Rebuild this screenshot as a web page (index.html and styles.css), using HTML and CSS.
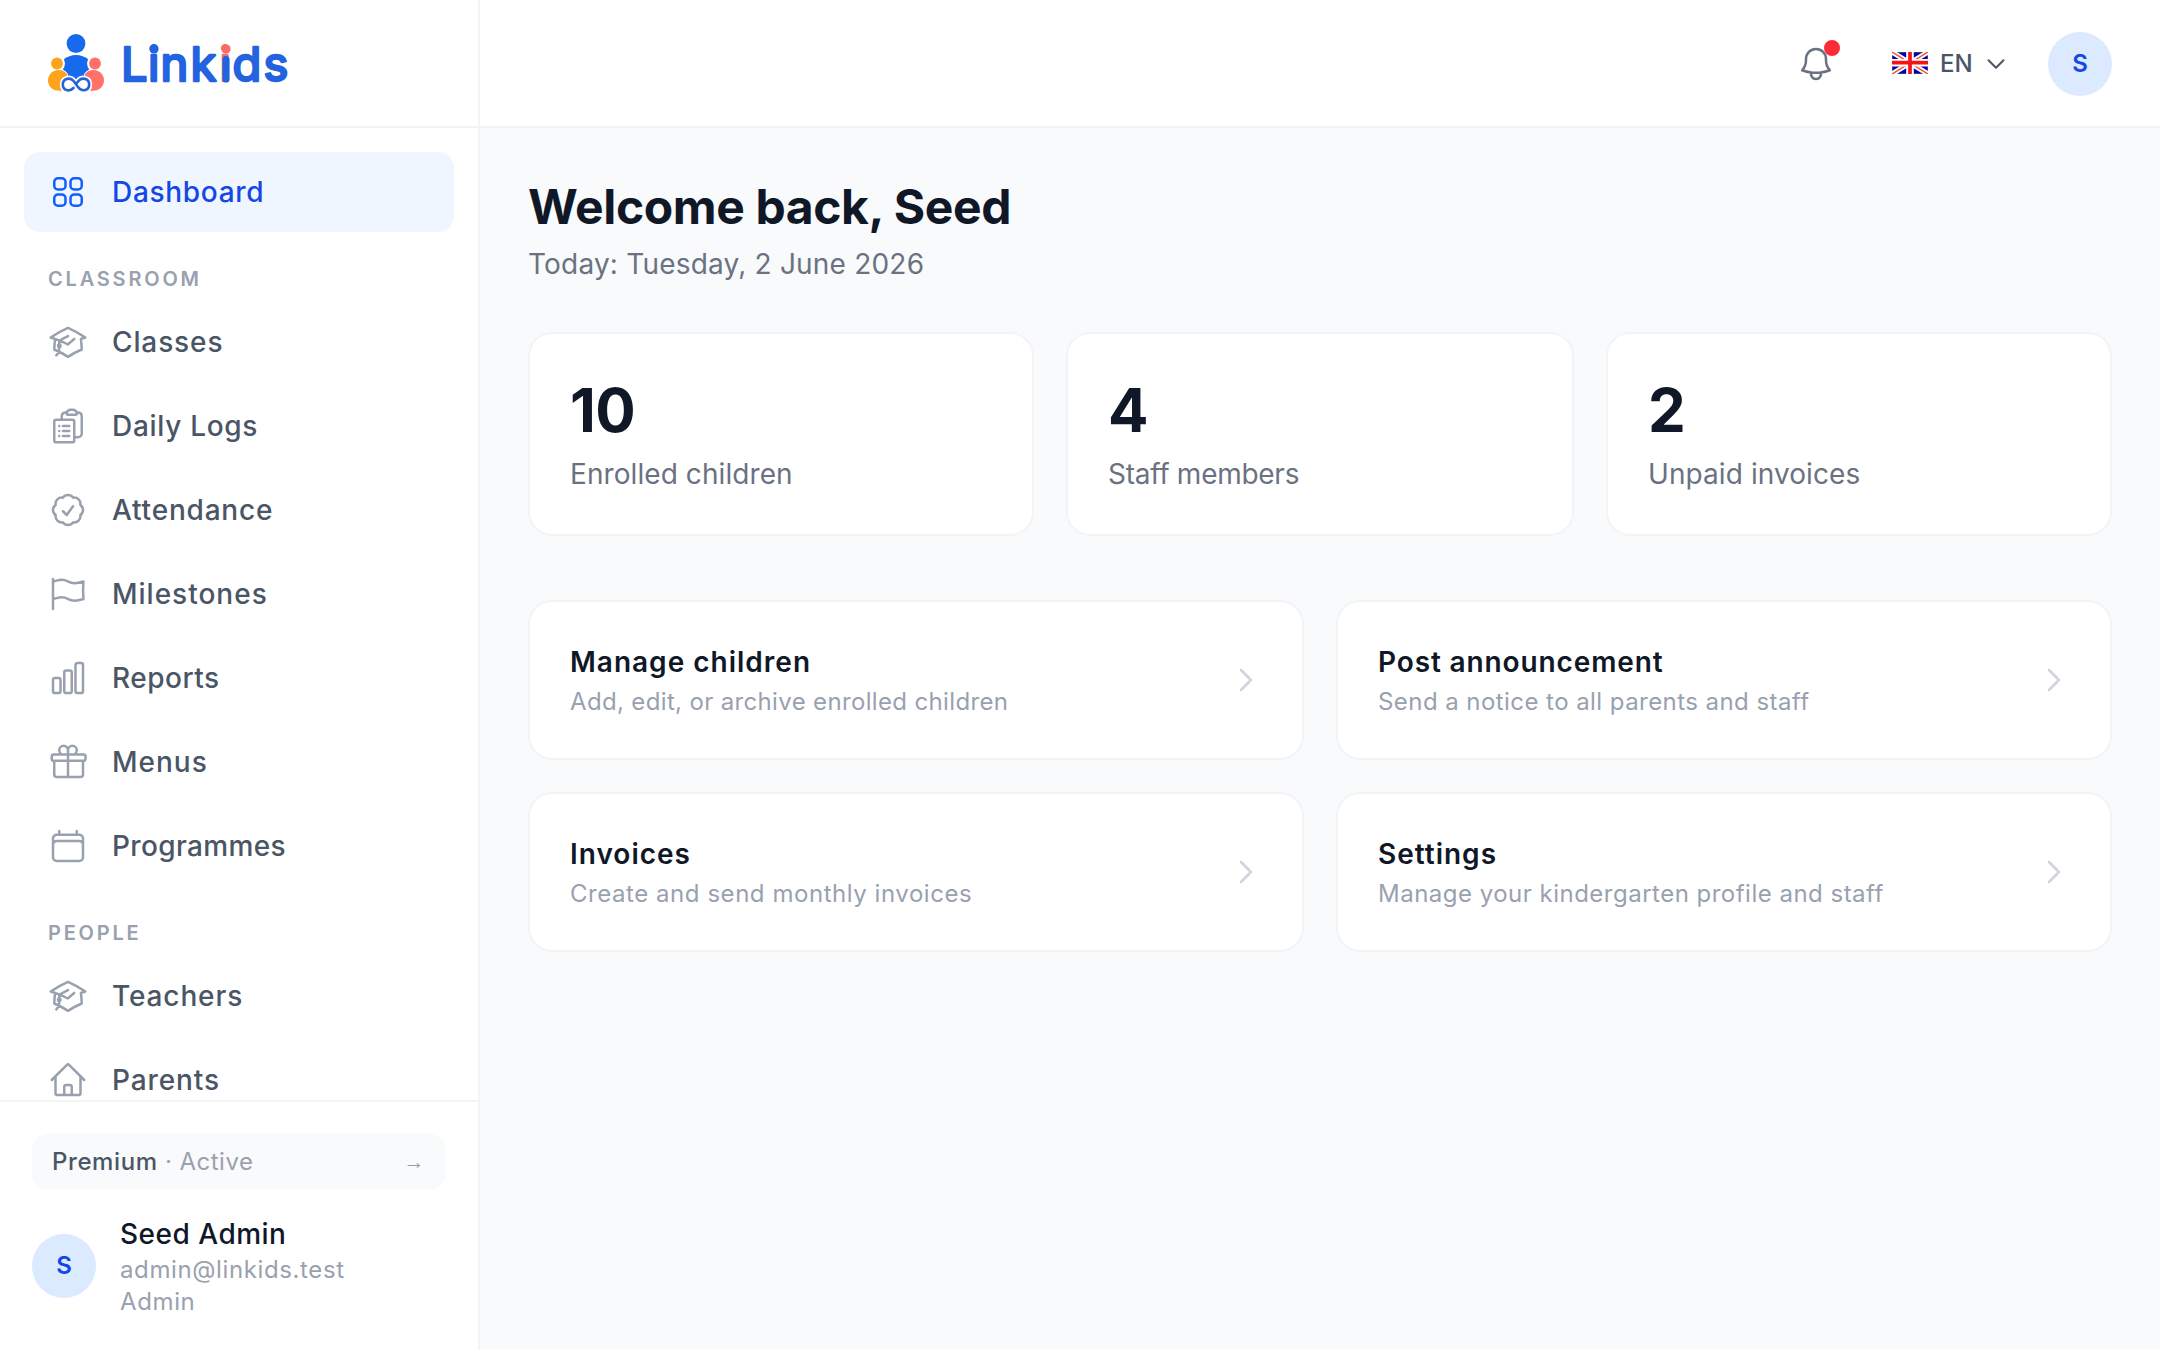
FILE: index.html
```html
<!DOCTYPE html>
<html lang="en">
<head>
  <meta charset="UTF-8">
  <meta name="viewport" content="width=device-width, initial-scale=1.0">
  <title>Linkids - Dashboard</title>
  <link rel="stylesheet" href="styles.css">
</head>
<body>
  <svg class="sprite" aria-hidden="true">
    <symbol id="i-cap" viewBox="0 0 24 24"><path d="M4.26 10.147a60.438 60.438 0 0 0-.491 6.347A48.62 48.62 0 0 1 12 20.904a48.62 48.62 0 0 1 8.232-4.41 60.46 60.46 0 0 0-.491-6.347m-15.482 0a50.636 50.636 0 0 0-2.658-.813A59.906 59.906 0 0 1 12 3.493a59.903 59.903 0 0 1 10.399 5.84c-.896.248-1.783.52-2.658.814m-15.482 0A50.717 50.717 0 0 1 12 13.489a50.702 50.702 0 0 1 3.74-3.342M6.75 15a.75.75 0 1 0 0-1.5.75.75 0 0 0 0 1.5Zm0 0v-3.675A55.378 55.378 0 0 1 12 8.443m-7.007 11.55A5.981 5.981 0 0 0 6.75 15.75v-1.5"/></symbol>
    <symbol id="i-right" viewBox="0 0 24 24"><path d="m8.25 4.5 7.5 7.5-7.5 7.5"/></symbol>
  </svg>

  <aside class="sidebar">
    <div class="brand">
      <svg class="logo" viewBox="0 0 244 64">
        <circle cx="28" cy="11.5" r="9.4" fill="#1769ee"/>
        <path d="M15.5 27.5Q21 23 28 23T40.5 27.5L41 40Q36 47 28 50Q20 47 15 40Z" fill="#1769ee"/>
        <circle cx="9" cy="31.5" r="8" fill="#fff"/>
        <circle cx="47" cy="31.5" r="8" fill="#fff"/>
        <path d="M0 48.5C0 42 5 37.9 10.5 37.9C14.5 37.9 17 39.5 19 42V58.7H11C4.5 58.7 0 54 0 48.5Z" fill="#fea31c" stroke="#fff" stroke-width="1.6" paint-order="stroke"/>
        <path d="M56 48.5C56 42 51 37.9 45.5 37.9C41.5 37.9 39 39.5 37 42V58.7H45C51.5 58.7 56 54 56 48.5Z" fill="#ff7169" stroke="#fff" stroke-width="1.6" paint-order="stroke"/>
        <circle cx="9" cy="31.5" r="5.9" fill="#fea31c"/>
        <circle cx="47" cy="31.5" r="5.9" fill="#ff7169"/>
        <path d="M25.5 56C21 60.5 14.8 58 14.8 52.5C14.8 46.5 22 44.5 26 49.5L30 55C34 60.5 41.2 58.5 41.2 52.5C41.2 46.5 34 44.5 30 49.5Z" fill="#fff" stroke="#fff" stroke-width="6"/>
        <path d="M25.5 56C21 60.5 14.8 58 14.8 52.5C14.8 46.5 22 44.5 26 49.5L30 55C34 60.5 41.2 58.5 41.2 52.5C41.2 46.5 34 44.5 30 49.5L28.6 51.3" stroke="#2563d8" stroke-width="2.6"/>
        <text class="wordmark" y="49" x="73 100 112.5 142.5 171.5 184.5 215.5">Link<tspan class="coral">i</tspan>ds</text>
        <!-- blue stem over the coral i, round dots on both -->
        <rect x="174.4" y="24" width="7.2" height="26.5" rx="3.5" fill="#2463e0"/>
        <circle cx="106" cy="17" r="4.6" fill="#2463e0"/>
        <circle cx="178" cy="17" r="4.6" fill="#f96b66"/>
      </svg>
    </div>

    <nav class="nav">
      <a class="item active">
        <svg viewBox="0 0 24 24"><rect x="3.75" y="3.75" width="6.75" height="6.75" rx="2.25"/><rect x="13.5" y="3.75" width="6.75" height="6.75" rx="2.25"/><rect x="3.75" y="13.5" width="6.75" height="6.75" rx="2.25"/><rect x="13.5" y="13.5" width="6.75" height="6.75" rx="2.25"/></svg>
        <span class="ls-70">Dashboard</span>
      </a>
      <p class="section">CLASSROOM</p>
      <a class="item">
        <svg><use href="#i-cap"/></svg>
        <span class="ls-90">Classes</span>
      </a>
      <a class="item">
        <svg viewBox="0 0 24 24"><path d="M9 12h3.75M9 15h3.75M9 18h3.75m3 .75H18a2.25 2.25 0 0 0 2.25-2.25V6.108c0-1.135-.845-2.098-1.976-2.192a48.424 48.424 0 0 0-1.123-.08m-5.801 0c-.065.21-.1.433-.1.664 0 .414.336.75.75.75h4.5a.75.75 0 0 0 .75-.75 2.25 2.25 0 0 0-.1-.664m-5.8 0A2.251 2.251 0 0 1 13.5 2.25H15c1.012 0 1.867.668 2.15 1.586m-5.8 0c-.376.023-.75.05-1.124.08C9.095 4.01 8.25 4.973 8.25 6.108V8.25m0 0H4.875c-.621 0-1.125.504-1.125 1.125v11.25c0 .621.504 1.125 1.125 1.125h9.75c.621 0 1.125-.504 1.125-1.125V9.375c0-.621-.504-1.125-1.125-1.125H8.25ZM6.75 12h.008v.008H6.75V12Zm0 3h.008v.008H6.75V15Zm0 3h.008v.008H6.75V18Z"/></svg>
        <span class="ls-70">Daily Logs</span>
      </a>
      <a class="item">
        <svg viewBox="0 0 24 24"><path d="M9 12.75 11.25 15 15 9.75M21 12c0 1.268-.63 2.39-1.593 3.068a3.745 3.745 0 0 1-1.043 3.296 3.745 3.745 0 0 1-3.296 1.043A3.745 3.745 0 0 1 12 21c-1.268 0-2.39-.63-3.068-1.593a3.746 3.746 0 0 1-3.296-1.043 3.745 3.745 0 0 1-1.043-3.296A3.745 3.745 0 0 1 3 12c0-1.268.63-2.39 1.593-3.068a3.745 3.745 0 0 1 1.043-3.296 3.746 3.746 0 0 1 3.296-1.043A3.746 3.746 0 0 1 12 3c1.268 0 2.39.63 3.068 1.593a3.746 3.746 0 0 1 3.296 1.043 3.746 3.746 0 0 1 1.043 3.296A3.745 3.745 0 0 1 21 12Z"/></svg>
        <span class="ls-80">Attendance</span>
      </a>
      <a class="item">
        <svg viewBox="0 0 24 24"><path d="M3 3v1.5M3 21v-6m0 0 2.77-.693a9 9 0 0 1 6.208.682l.108.054a9 9 0 0 0 6.086.71l3.114-.732a48.524 48.524 0 0 1-.005-10.499l-3.11.732a9 9 0 0 1-6.085-.711l-.108-.054a9 9 0 0 0-6.208-.682L3 4.5M3 15V4.5"/></svg>
        <span class="ls-100">Milestones</span>
      </a>
      <a class="item">
        <svg viewBox="0 0 24 24"><path d="M3 13.125C3 12.504 3.504 12 4.125 12h2.25c.621 0 1.125.504 1.125 1.125v6.75C7.5 20.496 6.996 21 6.375 21h-2.25A1.125 1.125 0 0 1 3 19.875v-6.75ZM9.75 8.625c0-.621.504-1.125 1.125-1.125h2.25c.621 0 1.125.504 1.125 1.125v11.25c0 .621-.504 1.125-1.125 1.125h-2.25a1.125 1.125 0 0 1-1.125-1.125V8.625ZM16.5 4.125c0-.621.504-1.125 1.125-1.125h2.25C20.496 3 21 3.504 21 4.125v15.75c0 .621-.504 1.125-1.125 1.125h-2.25a1.125 1.125 0 0 1-1.125-1.125V4.125Z"/></svg>
        <span class="ls-50">Reports</span>
      </a>
      <a class="item">
        <svg viewBox="0 0 24 24"><path d="M21 11.25v8.25a1.5 1.5 0 0 1-1.5 1.5H5.25a1.5 1.5 0 0 1-1.5-1.5v-8.25M12 4.875A2.625 2.625 0 1 0 9.375 7.5H12m0-2.625V7.5m0-2.625A2.625 2.625 0 1 1 14.625 7.5H12m0 0V21m-8.625-9.75h18c.621 0 1.125-.504 1.125-1.125v-1.5c0-.621-.504-1.125-1.125-1.125h-18c-.621 0-1.125.504-1.125 1.125v1.5c0 .621.504 1.125 1.125 1.125Z"/></svg>
        <span class="ls-100">Menus</span>
      </a>
      <a class="item">
        <svg viewBox="0 0 24 24"><path d="M6.75 3v2.25M17.25 3v2.25M3 18.75V7.5a2.25 2.25 0 0 1 2.25-2.25h13.5A2.25 2.25 0 0 1 21 7.5v11.25m-18 0A2.25 2.25 0 0 0 5.25 21h13.5A2.25 2.25 0 0 0 21 18.75m-18 0v-7.5A2.25 2.25 0 0 1 5.25 9h13.5A2.25 2.25 0 0 1 21 11.25v7.5"/></svg>
        <span class="ls-35">Programmes</span>
      </a>
      <p class="section">PEOPLE</p>
      <a class="item">
        <svg><use href="#i-cap"/></svg>
        <span class="ls-90">Teachers</span>
      </a>
      <a class="item">
        <svg viewBox="0 0 24 24"><path d="m2.25 12 8.954-8.955c.44-.439 1.152-.439 1.591 0L21.75 12M4.5 9.75v10.125c0 .621.504 1.125 1.125 1.125H9.75v-4.875c0-.621.504-1.125 1.125-1.125h2.25c.621 0 1.125.504 1.125 1.125V21h4.125c.621 0 1.125-.504 1.125-1.125V9.75M8.25 21h8.25"/></svg>
        <span class="ls-90">Parents</span>
      </a>
    </nav>

    <div class="side-footer">
      <a class="plan">
        <span class="ls-50"><b>Premium</b> · Active</span>
        <span class="arrow">→</span>
      </a>
      <div class="user">
        <div class="avatar">S</div>
        <div>
          <p class="user-name">Seed Admin</p>
          <p class="user-info">admin@linkids.test</p>
          <p class="user-info">Admin</p>
        </div>
      </div>
    </div>
  </aside>

  <div class="page">
    <header class="topbar">
      <div class="bell">
        <svg viewBox="0 0 24 24"><path d="M14.857 17.082a23.848 23.848 0 0 0 5.454-1.31A8.967 8.967 0 0 1 18 9.75V9A6 6 0 0 0 6 9v.75a8.967 8.967 0 0 1-2.312 6.022c1.733.64 3.56 1.085 5.455 1.31m5.714 0a24.255 24.255 0 0 1-5.714 0m5.714 0a3 3 0 1 1-5.714 0"/></svg>
        <span class="dot"></span>
      </div>
      <div class="lang">
        <svg class="flag" viewBox="0 0 36 22">
          <path d="M0 0h36v22H0z" fill="#0000b4"/>
          <path d="M0 0l36 22M36 0L0 22" stroke="#fff" stroke-width="5"/>
          <path d="M0 0l36 22M36 0L0 22" stroke="#ff4422" stroke-width="1.4"/>
          <path d="M18 0v22M0 10.7h36" stroke="#fff" stroke-width="7.6"/>
          <path d="M18 0v22M0 10.7h36" stroke="#f51414" stroke-width="3.7"/>
        </svg>
        <span class="code">EN</span>
        <svg class="chevron" viewBox="0 0 24 24"><path d="m19.5 8.25-7.5 7.5-7.5-7.5"/></svg>
      </div>
      <div class="avatar">S</div>
    </header>

    <main class="content">
      <h1>Welcome back, Seed</h1>
      <p class="today">Today: Tuesday, 2 June 2026</p>

      <div class="stats">
        <div class="card">
          <p class="number">10</p>
          <p class="label">Enrolled children</p>
        </div>
        <div class="card">
          <p class="number">4</p>
          <p class="label tight">Staff members</p>
        </div>
        <div class="card">
          <p class="number">2</p>
          <p class="label">Unpaid invoices</p>
        </div>
      </div>

      <div class="actions">
        <a class="card action">
          <div>
            <p class="title ls-100">Manage children</p>
            <p class="desc ls-35">Add, edit, or archive enrolled children</p>
          </div>
          <svg><use href="#i-right"/></svg>
        </a>
        <a class="card action">
          <div>
            <p class="title ls-90">Post announcement</p>
            <p class="desc ls-45">Send a notice to all parents and staff</p>
          </div>
          <svg><use href="#i-right"/></svg>
        </a>
        <a class="card action">
          <div>
            <p class="title ls-100">Invoices</p>
            <p class="desc ls-55">Create and send monthly invoices</p>
          </div>
          <svg><use href="#i-right"/></svg>
        </a>
        <a class="card action">
          <div>
            <p class="title ls-100">Settings</p>
            <p class="desc ls-50">Manage your kindergarten profile and staff</p>
          </div>
          <svg><use href="#i-right"/></svg>
        </a>
      </div>
    </main>
  </div>
</body>
</html>
```
FILE: styles.css
```css
* {
    box-sizing: border-box;
    margin: 0;
    padding: 0;
}

body {
    display: flex;
    height: 100vh;
    overflow: hidden;
    font-family: Inter, "Liberation Sans", sans-serif;
    font-size: 28px;
    line-height: 40px;
    color: #101828;
    background-color: #f9fafb;
}

svg {
    display: block;
    flex-shrink: 0;
    fill: none;
    stroke: currentColor;
    stroke-width: 1.5;
    stroke-linecap: round;
    stroke-linejoin: round;
}

.sprite {
    display: none;
}

/* letter spacing steps, in 1/100 px */
.ls-35 { letter-spacing: 0.35px; }
.ls-45 { letter-spacing: 0.44px; }
.ls-50 { letter-spacing: 0.49px; }
.ls-55 { letter-spacing: 0.55px; }
.ls-70 { letter-spacing: 0.7px; }
.ls-80 { letter-spacing: 0.8px; }
.ls-90 { letter-spacing: 0.88px; }
.ls-100 { letter-spacing: 1px; }

/* Sidebar */

.sidebar {
    display: flex;
    flex-direction: column;
    flex-shrink: 0;
    width: 480px;
    background-color: #fff;
    border-right: 2px solid #f3f4f6;
}

.brand {
    height: 128px;
    padding: 32px 48px;
    border-bottom: 2px solid #f3f4f6;
}

.logo {
    width: 244px;
    height: 64px;
    stroke: none;
}

.wordmark {
    font-size: 47px;
    font-weight: 400;
    fill: #2463e0;
    stroke: #2463e0;
    stroke-width: 2.6;
}

.coral {
    fill: #f96b66;
    stroke: #f96b66;
}

.nav {
    flex: 1;
    min-height: 0;
    padding: 24px;
    overflow: hidden;
}

.item {
    display: flex;
    align-items: center;
    gap: 24px;
    height: 80px;
    margin-bottom: 4px;
    padding: 0 24px;
    border-radius: 16px;
    font-weight: 500;
    color: #4a5565;
}

.item svg {
    width: 40px;
    height: 40px;
    color: #99a1af;
}

.item.active {
    background-color: #eff6ff;
    color: #1447e6;
}

.item.active svg {
    color: #155dfc;
}

.section {
    padding: 28px 24px 8px;
    font-size: 20px;
    line-height: 30px;
    font-weight: 600;
    letter-spacing: 2.8px;
    color: #99a1af;
}

.side-footer {
    padding: 32px;
    border-top: 2px solid #f3f4f6;
}

.plan {
    display: flex;
    justify-content: space-between;
    margin-bottom: 24px;
    padding: 12px 20px;
    border-radius: 16px;
    background-color: #f9fafb;
    font-size: 24px;
    line-height: 32px;
    color: #99a1af;
}

.plan b {
    font-weight: 500;
    letter-spacing: 0.6px;
    color: #4a5565;
}

.arrow {
    width: 24px;
    font-family: "Liberation Sans", sans-serif;
    font-size: 21px;
    line-height: 31px;
    text-align: center;
}

.user {
    display: flex;
    align-items: center;
    gap: 24px;
}

.avatar {
    display: flex;
    align-items: center;
    justify-content: center;
    width: 64px;
    height: 64px;
    border-radius: 50%;
    background-color: #dbeafe;
    font-size: 24px;
    font-weight: 600;
    color: #1447e6;
}

.user-name {
    font-weight: 500;
    letter-spacing: 0.5px;
}

.user-info {
    font-size: 24px;
    line-height: 32px;
    letter-spacing: 0.62px;
    color: #99a1af;
}

/* Top bar */

.page {
    flex: 1;
}

.topbar {
    display: flex;
    align-items: flex-start;
    justify-content: flex-end;
    height: 128px;
    padding: 32px 48px 0;
    background-color: #fff;
    border-bottom: 2px solid #f3f4f6;
}

.bell {
    position: relative;
    margin-right: 56px;
    padding: 12px 0;
    color: #6a7282;
}

.bell svg {
    width: 40px;
    height: 40px;
}

.dot {
    position: absolute;
    top: 8px;
    right: -4px;
    width: 16px;
    height: 16px;
    border-radius: 50%;
    background-color: #fb2c36;
}

.lang {
    display: flex;
    align-items: center;
    gap: 12px;
    height: 64px;
    margin-right: 40px;
    font-size: 24px;
    font-weight: 500;
    color: #4a5565;
}

.code {
    width: 32px;
}

.flag {
    width: 36px;
    height: 22px;
    margin-top: -2px;
    stroke-linecap: butt;
}

.chevron {
    width: 24px;
    height: 24px;
    stroke-width: 2;
}

/* Content */

.content {
    padding: 47px 48px 48px;
}

h1 {
    font-size: 48px;
    line-height: 64px;
    font-weight: 700;
    letter-spacing: -0.38px;
}

.today {
    margin-top: 5px;
    margin-bottom: 48px;
    letter-spacing: 0.2px;
    color: #6a7282;
}

.card {
    padding: 40px;
    background-color: #fff;
    border: 2px solid #f3f4f6;
    border-radius: 24px;
}

.stats {
    display: grid;
    grid-template-columns: 1fr 508px 1fr;
    gap: 32px;
    margin-bottom: 64px;
}

.number {
    font-size: 60px;
    line-height: 72px;
    font-weight: 700;
    letter-spacing: -0.5px;
}

.label {
    margin-top: 8px;
    letter-spacing: 0.08px;
    color: #6a7282;
}

.label.tight {
    letter-spacing: -0.27px;
}

.actions {
    display: grid;
    grid-template-columns: repeat(2, 1fr);
    gap: 32px;
}

.action {
    display: flex;
    align-items: center;
    justify-content: space-between;
}

.action svg {
    width: 32px;
    height: 32px;
    stroke-width: 2;
    color: #d1d5dc;
}

.title {
    font-weight: 600;
}

.desc {
    margin-top: 4px;
    font-size: 24px;
    line-height: 32px;
    color: #99a1af;
}
```
